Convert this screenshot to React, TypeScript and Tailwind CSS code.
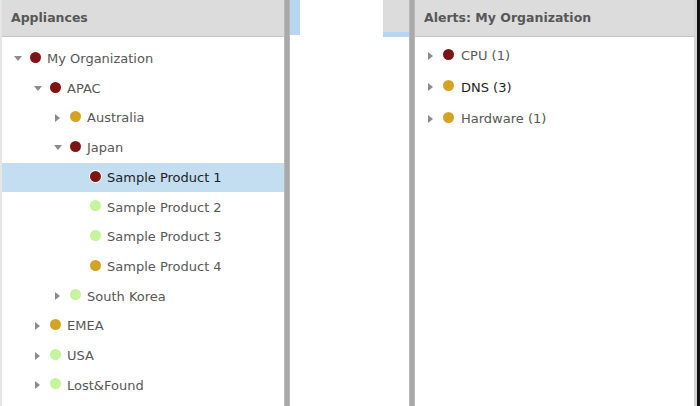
import React from 'react';

type Status = 'critical' | 'warning' | 'ok';

type TreeRow = {
  label: string;
  level: number;
  status: Status;
  toggle?: 'open' | 'closed';
  selected?: boolean;
};

const DOT: Record<Status, string> = {
  critical: 'bg-[#7e1515]',
  warning: 'bg-[#d3a423]',
  ok: 'bg-[#c6f39d]',
};

const PAD = ['pl-[10px]', 'pl-[30px]', 'pl-[50px]', 'pl-[70px]'];

const appliances: TreeRow[] = [
  { label: 'My Organization', level: 0, status: 'critical', toggle: 'open' },
  { label: 'APAC', level: 1, status: 'critical', toggle: 'open' },
  { label: 'Australia', level: 2, status: 'warning', toggle: 'closed' },
  { label: 'Japan', level: 2, status: 'critical', toggle: 'open' },
  { label: 'Sample Product 1', level: 3, status: 'critical', selected: true },
  { label: 'Sample Product 2', level: 3, status: 'ok' },
  { label: 'Sample Product 3', level: 3, status: 'ok' },
  { label: 'Sample Product 4', level: 3, status: 'warning' },
  { label: 'South Korea', level: 2, status: 'ok', toggle: 'closed' },
  { label: 'EMEA', level: 1, status: 'warning', toggle: 'closed' },
  { label: 'USA', level: 1, status: 'ok', toggle: 'closed' },
  { label: 'Lost&Found', level: 1, status: 'ok', toggle: 'closed' },
];

const alerts = [
  { label: 'CPU (1)', status: 'critical' as Status, dark: false },
  { label: 'DNS (3)', status: 'warning' as Status, dark: true },
  { label: 'Hardware (1)', status: 'warning' as Status, dark: false },
];

function Toggle({ state }: { state?: 'open' | 'closed' }) {
  return (
    <span className="w-[12px] h-[12px] flex items-center justify-center shrink-0">
      {state === 'open' && (
        <svg width="8" height="6" viewBox="0 0 8 6">
          <path d="M0 0 L8 0 L4 5 Z" fill="#8c8c8c" />
        </svg>
      )}
      {state === 'closed' && (
        <svg width="6" height="8" viewBox="0 0 6 8">
          <path d="M0 0 L5 4 L0 8 Z" fill="#8c8c8c" />
        </svg>
      )}
    </span>
  );
}

function Dot({ status, ring }: { status: Status; ring?: boolean }) {
  return (
    <span
      className={`block w-[11px] h-[11px] -mt-[3px] rounded-full shrink-0 ${DOT[status]} ${ring ? 'ring-1 ring-white' : ''}`}
    />
  );
}

function Header({ title }: { title: string }) {
  return (
    <div className="h-[37px] shrink-0 bg-[#dcdcdc] border-b border-[#c4c4c4] flex items-center pl-[9px] text-[12.5px] font-bold text-[#575757]">
      {title}
    </div>
  );
}

function Splitter() {
  return <div className="w-[6px] shrink-0 bg-[#a9a9a9] border-x border-[#b8b8b8]" />;
}

export default function App() {
  return (
    <div className="w-[700px] h-[406px] flex bg-white overflow-hidden font-['DejaVu_Sans',sans-serif]">
      {/* Appliances tree */}
      <div className="w-[284px] shrink-0 flex flex-col border-l-2 border-[#e6e6e6]">
        <Header title="Appliances" />
        <div className="pt-[7px]">
          {appliances.map((row) => (
            <div
              key={row.label}
              className={`h-[29.7px] flex items-center ${PAD[row.level]} ${row.selected ? 'bg-[#c3ddf1]' : ''}`}
            >
              {row.level < 3 ? <Toggle state={row.toggle} /> : <span className="w-[12px] shrink-0" />}
              <span className="ml-[6px] shrink-0">
                <Dot status={row.status} ring={row.selected} />
              </span>
              <span className={`ml-[6px] text-[13px] ${row.selected ? 'text-[#1e1e1e]' : 'text-[#575757]'}`}>
                {row.label}
              </span>
            </div>
          ))}
        </div>
      </div>
      <Splitter />

      {/* collapsed column stubs */}
      <div className="w-[10px] shrink-0 flex flex-col">
        <div className="h-[35px] bg-[#b6d6f1]" />
      </div>
      <div className="w-[83px] shrink-0" />
      <div className="w-[26px] shrink-0 flex flex-col">
        <div className="h-[32px] bg-[#dcdcdc]" />
        <div className="h-[5px] bg-[#b6d6f1]" />
      </div>
      <Splitter />

      {/* Alerts */}
      <div className="w-[279px] shrink-0 flex flex-col">
        <Header title="Alerts: My Organization" />
        <div className="pt-[3px]">
          {alerts.map((a) => (
            <div key={a.label} className="h-[31.5px] flex items-center pl-[10px]">
              <Toggle state="closed" />
              <span className="ml-[6px] shrink-0">
                <Dot status={a.status} />
              </span>
              <span className={`ml-[7px] text-[13px] ${a.dark ? 'text-[#1e1e1e]' : 'text-[#575757]'}`}>
                {a.label}
              </span>
            </div>
          ))}
        </div>
      </div>
      <div className="w-[3px] shrink-0 bg-[#d4d4d4]" />
      <div className="w-[3px] shrink-0 bg-[#111111]" />
    </div>
  );
}
